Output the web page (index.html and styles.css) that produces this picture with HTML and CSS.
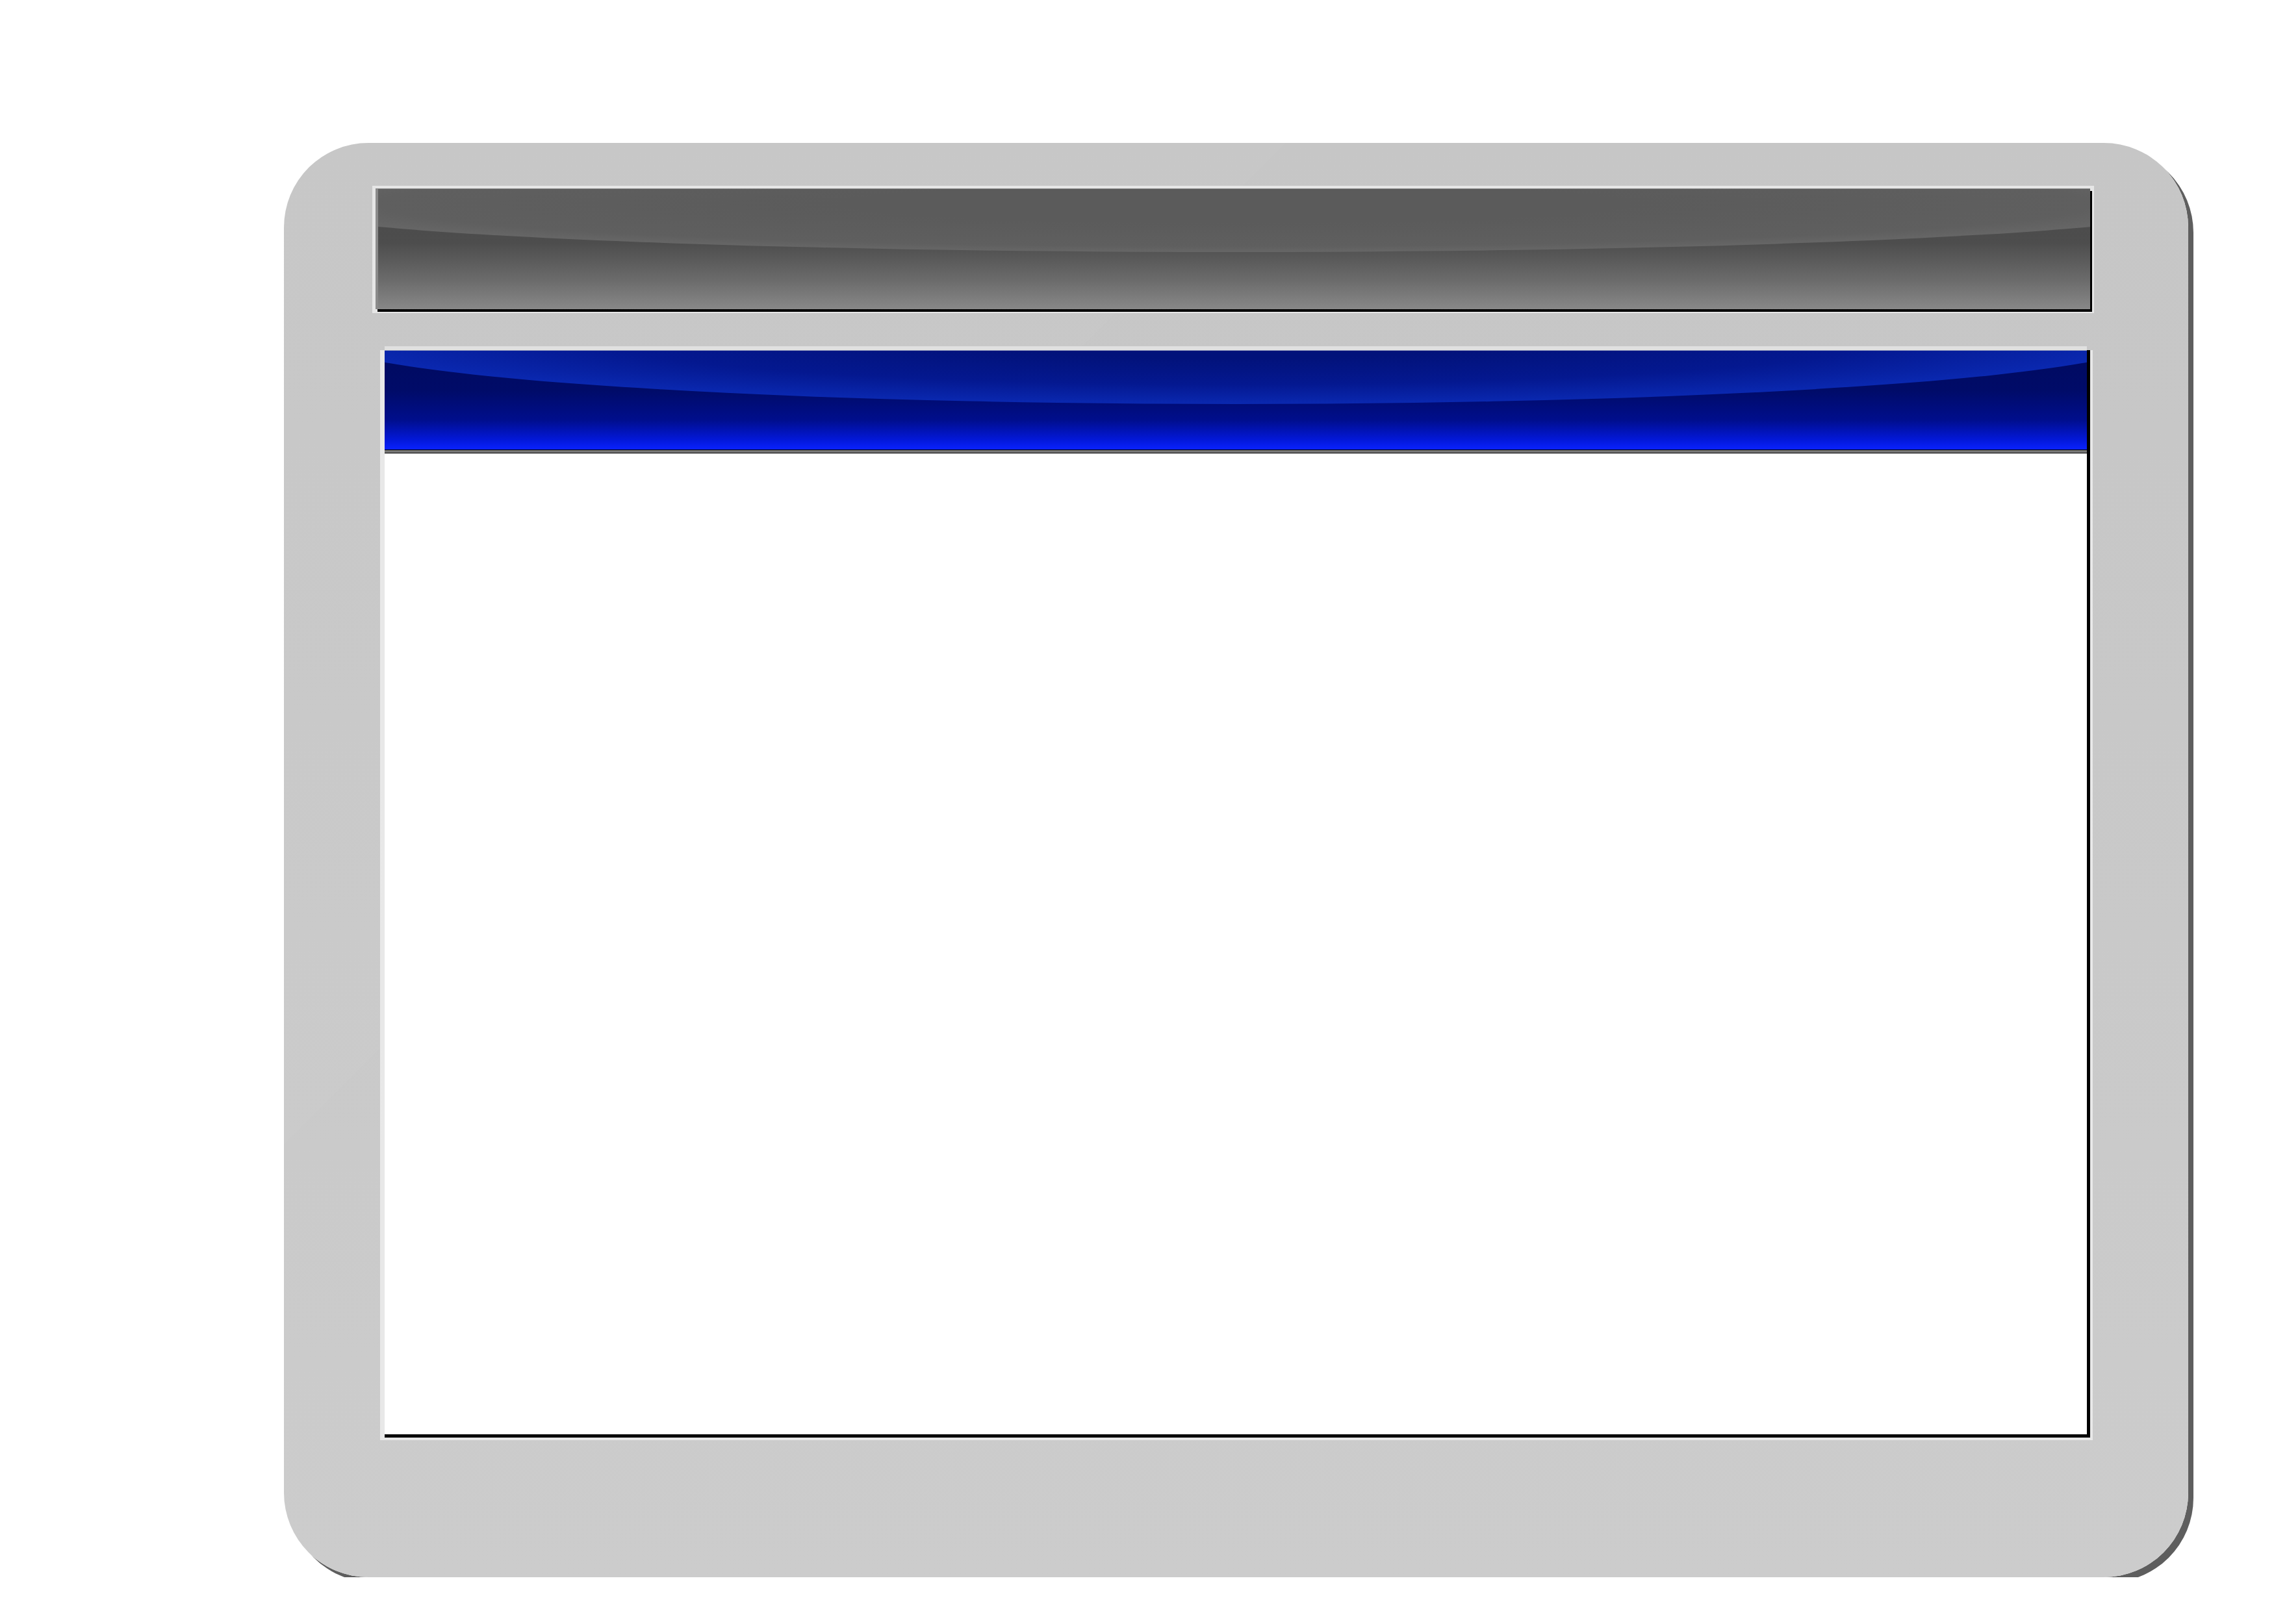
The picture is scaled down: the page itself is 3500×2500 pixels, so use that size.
FILE: index.html
```html
<!DOCTYPE html>
<html lang="en">
<head>
  <meta charset="UTF-8">
  <title>Window Frame</title>
  <link rel="stylesheet" href="styles.css">
</head>
<body>
  <div class="page">
    <!-- outer rounded device frame -->
    <div class="frame">
      <div class="titlebar-wrap">
        <div class="titlebar"></div>
      </div>
      <div class="panel-wrap">
        <div class="panel">
          <div class="panel-header"></div>
          <div class="panel-rule"></div>
          <div class="panel-body"></div>
        </div>
      </div>
    </div>
  </div>
</body>
</html>
```

FILE: styles.css
```css
body {
  margin: 0;
  background: #fff;
}
.page {
  padding: 220px 0 0 437px;
}
/* Frame */
.frame {
  width: 2931px;
  height: 2208px;
  box-sizing: border-box;
  padding: 66px 145px 211px 136px;
  display: flex;
  flex-direction: column;
  border-radius: 130px;
  background:
    linear-gradient(135deg, rgba(255,255,255,0.025) 0 30%, transparent 30%),
    linear-gradient(#c6c6c6, #c8c8c8 40%, #cccccc);
  box-shadow: 8px 8px 0 #5e5e5e;
}
/* Grey title bar */
.titlebar-wrap {
  background: #e6e6e6;
  padding: 4px 6px 6px 5px;
}
.titlebar {
  height: 186px;
  position: relative;
  overflow: hidden;
  background: linear-gradient(#4a4a4a 0%, #4d4d4d 45%, #6a6a6a 75%, #888 100%);
  border-left: 4px solid #8a8a8a;
  border-top: 1px solid #8a8a8a;
  box-sizing: border-box;
  box-shadow: 3px 4px 0 #000;
}
.titlebar::before {
  content: "";
  position: absolute;
  left: 50%;
  top: -52px;
  width: 3000px;
  height: 149px;
  margin-left: -1500px;
  border-radius: 50%;
  background: radial-gradient(closest-side, #5b5b5b 40%, #5f5f5f 88%, #666 100%);
}
/* Blue panel */
.panel-wrap {
  flex: 1;
  margin: 57px 2px 0 12px;
  padding: 0 4px 4px 7px;
  background: #e8e8e8;
  display: flex;
}
.panel {
  flex: 1;
  display: flex;
  flex-direction: column;
  background: #fff;
  border-right: 5px solid #000;
  border-bottom: 5px solid #000;
}
.panel-header {
  height: 153px;
  position: relative;
  overflow: hidden;
  border-top: 1px solid #8890b8;
  box-sizing: border-box;
  background: linear-gradient(#000a60 0%, #000b68 40%, #000e8c 70%, #0318d8 90%, #0a22ff 100%);
  box-shadow: 0 -6px 0 #e0e0e0;
}
.panel-header::before {
  content: "";
  position: absolute;
  left: 50%;
  top: -122px;
  width: 2820px;
  height: 204px;
  margin-left: -1410px;
  border-radius: 50%;
  background: radial-gradient(closest-side, #02127a 30%, #041890 70%, #0a28b0 100%);
}
.panel-rule {
  height: 4px;
  background: #777;
  border-top: 1px solid #000;
  border-bottom: 1px solid #000;
}
.panel-body {
  flex: 1;
}
```
